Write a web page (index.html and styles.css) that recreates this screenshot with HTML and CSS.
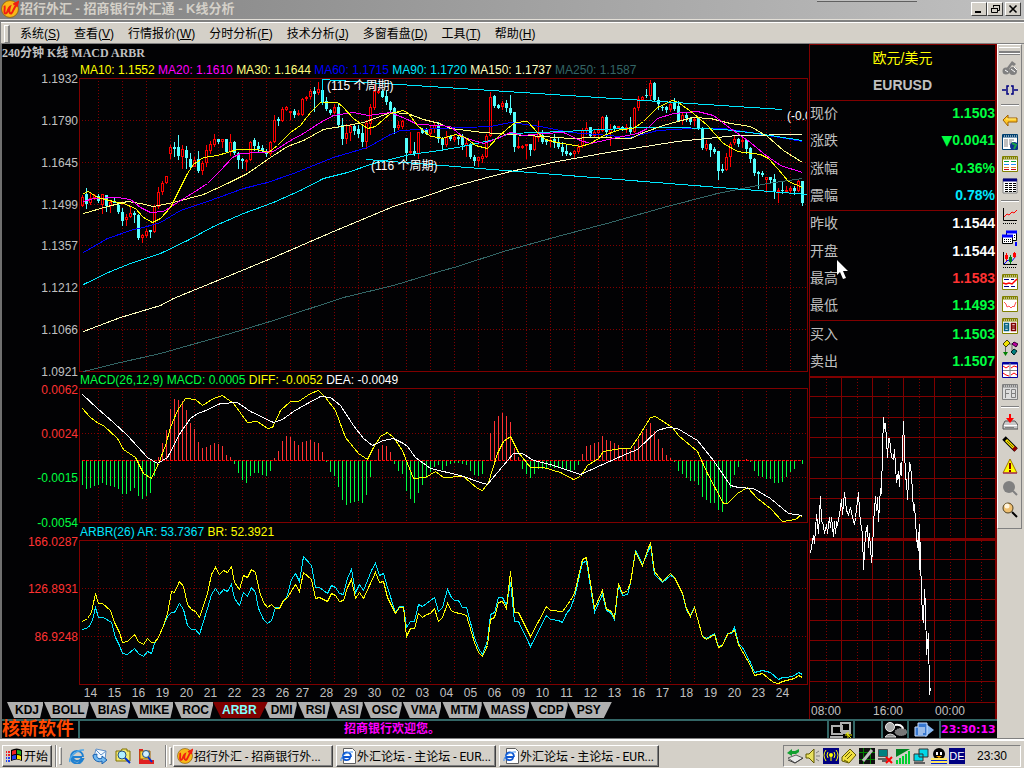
FILE: index.html
```html
<!DOCTYPE html>
<html lang="zh-CN">
<head>
  <meta charset="UTF-8">
  <meta name="viewport" content="width=device-width, initial-scale=1.0">
  <title>招行外汇 - 招商银行外汇通 - K线分析</title>
  <link rel="stylesheet" href="styles.css">
</head>
<body>
  <div class="docked-bar"></div>
  <header class="titlebar">
    <svg class="app-icon" width="18" height="18" viewBox="0 0 16 16"><circle cx="8" cy="8" r="7.5" fill="#f8b818" stroke="#805000" stroke-width=".6"/><path d="M3 5c1 2-1 7 1 7s2-5 4-6c-1 3-1 6 1 6 2-1 2-5 5-8M11 4l4-2-1 4" fill="none" stroke="#f02010" stroke-width="1.8"/></svg>
    <h1>招行外汇 - 招商银行外汇通 - K线分析</h1>
    <div class="window-buttons">
      <button aria-label="最小化"><svg width="12" height="10"><path d="M2 8h6" stroke="#000" stroke-width="2"/></svg></button>
      <button aria-label="还原"><svg width="12" height="10"><path d="M4.500 3.500v-2h6v5h-2M4 1.500h7M2.500 4.500h6v4h-6zM2 4.500h7" fill="none" stroke="#000"/></svg></button>
      <button class="close" aria-label="关闭"><svg width="12" height="10"><path d="M2.500 1.500l7 7M9.500 1.500l-7 7" stroke="#000" stroke-width="1.600"/></svg></button>
    </div>
  </header>

  <nav class="menubar">
    <span class="grip"></span>
    <button>系统(<u>S</u>)</button>
    <button>查看(<u>V</u>)</button>
    <button>行情报价(<u>W</u>)</button>
    <button>分时分析(<u>F</u>)</button>
    <button>技术分析(<u>J</u>)</button>
    <button>多窗看盘(<u>D</u>)</button>
    <button>工具(<u>T</u>)</button>
    <button>帮助(<u>H</u>)</button>
  </nav>

  <div class="workspace">
    <div class="screen">
      <main class="panels">
        <section class="charts">
          <h2>240分钟 K线 MACD ARBR</h2>
          <p class="legend">
            <span class="yellow">MA10: 1.1552</span>
            <span class="magenta">MA20: 1.1610</span>
            <span class="pale">MA30: 1.1644</span>
            <span class="blue">MA60: 1.1715</span>
            <span class="cyan">MA90: 1.1720</span>
            <span class="cream">MA150: 1.1737</span>
            <span class="slate">MA250: 1.1587</span>
          </p>
          <svg class="plot" id="price" viewBox="2 18 807 295"></svg>
          <p class="legend macd-legend">
            <span class="green">MACD(26,12,9) MACD: 0.0005</span>
            <span class="yellow">DIFF: -0.0052</span>
            <span class="white">DEA: -0.0049</span>
          </p>
          <svg class="plot" id="macd" viewBox="2 18 807 136"></svg>
          <p class="legend">
            <span class="cyan">ARBR(26) AR: 53.7367</span>
            <span class="yellow">BR: 52.3921</span>
          </p>
          <svg class="plot" id="arbr" viewBox="2 170 807 162"></svg>
          <div class="tabs">
            <button>KDJ</button>
            <button>BOLL</button>
            <button>BIAS</button>
            <button>MIKE</button>
            <button>ROC</button>
            <button class="active">ARBR</button>
            <button>DMI</button>
            <button>RSI</button>
            <button>ASI</button>
            <button>OSC</button>
            <button>VMA</button>
            <button>MTM</button>
            <button>MASS</button>
            <button>CDP</button>
            <button>PSY</button>
          </div>
        </section>

        <section class="quote">
          <div class="quote-head">
            <h2>欧元/美元</h2>
            <h3>EURUSD</h3>
          </div>
          <table>
            <tbody>
              <tr><th scope="row">现价</th><td class="green">1.1503</td></tr>
              <tr><th scope="row">涨跌</th><td class="green"><span class="arrow">▼</span>0.0041</td></tr>
              <tr><th scope="row">涨幅</th><td class="green">-0.36%</td></tr>
              <tr><th scope="row">震幅</th><td class="cyan">0.78%</td></tr>
            </tbody>
            <tbody>
              <tr><th scope="row">昨收</th><td class="white">1.1544</td></tr>
              <tr><th scope="row">开盘</th><td class="white">1.1544</td></tr>
              <tr><th scope="row">最高</th><td class="red">1.1583</td></tr>
              <tr><th scope="row">最低</th><td class="green">1.1493</td></tr>
            </tbody>
            <tbody>
              <tr><th scope="row">买入</th><td class="green">1.1503</td></tr>
              <tr><th scope="row">卖出</th><td class="green">1.1507</td></tr>
            </tbody>
          </table>
          <svg class="plot" id="intraday" viewBox="810 6 185 343"></svg>
          <svg class="pointer" width="14" height="20" viewBox="0 0 14 20"><path d="M1 0v15l3-3 3 7 3-1-3-7h5z" fill="#fff"/></svg>
        </section>
      </main>

      <footer class="statusbar">
        <strong class="brand">核新软件</strong>
        <span class="message">招商银行欢迎您。</span>
        <span class="cell wide"><svg width="24" height="16"><path d="M12 1h9v8h-9zM3 4h10v8H3z" fill="#000" stroke="#b0b0b0" stroke-width="2"/><path d="M1 15h13M13 11h9" stroke="#b0b0b0" stroke-width="2"/><path d="M16 13h7M19 10v6M17 11l5 5" stroke="#e8e800"/></svg></span>
        <span class="cell gap"></span>
        <span class="cell wide"><svg width="24" height="16"><circle cx="7" cy="5" r="4.500" fill="#aaa" stroke="#eee"/><path d="M2 15q5-6 11 0z" fill="#888" stroke="#ddd"/><path d="M12 3c8-1 9 4 7 6" fill="none" stroke="#fff" stroke-width="2"/><ellipse cx="18" cy="10" rx="6" ry="3.500" fill="#777" stroke="#aaa" stroke-dasharray="1 1"/></svg></span>
        <span class="cell page"><svg width="22" height="16"><path d="M12 1l9 7-9 7z" fill="#88b8f0"/><path d="M2 5h3V1h9v13H2z" fill="#3878d0" stroke="#cce0ff"/><path d="M5 6h7M5 8h7M5 10h7M5 12h5" stroke="#fff"/></svg></span>
        <time class="clock">23:30:13</time>
      </footer>
    </div>

    <aside class="side">
      <div class="toolbar">
        <span class="toolbar-grip"></span>
        <button aria-label="电话"><svg viewBox="0 0 16 16"><path d="M4 9l6-8 4 3-2 2-2-1-3 4z" fill="#808080"/><circle cx="4" cy="11" r="3.500" fill="#808080"/><circle cx="11" cy="11" r="4" fill="#808080"/><path d="M3 10l3 2M9 9l4 3M12 7l3 3" stroke="#fff"/></svg></button>
        <button aria-label="连接"><svg viewBox="0 0 16 16"><path d="M0 8h4M12 8h4M7 4H5v8h2M9 4h2v8H9" fill="none" stroke="#000080" stroke-width="1.500"/></svg></button>
        <hr>
        <button aria-label="后退"><svg viewBox="0 0 16 16"><path d="M1 8l5-5v3h9v4H6v4z" fill="#ffc828" stroke="#a06000"/><path d="M4 7h10" stroke="#fff080"/></svg></button>
        <button aria-label="行情首页"><svg viewBox="0 0 16 16"><path d="M.5.5h15v15H.5z" fill="#fff" stroke="#004070"/><path d="M1 2h14" stroke="#004070" stroke-width="3"/><path d="M2 2h13" stroke="#fff" stroke-dasharray="1 1"/><path d="M2 6h4M7 6h5M2 8h4M7 8h3M2 10h4M7 10h2M2 12h4" stroke="#808080"/><circle cx="12" cy="12" r="4" fill="#103090"/><path d="M10 9l4 2-2 4" stroke="#18a048" stroke-width="2" fill="none"/></svg></button>
        <button aria-label="报价列表"><svg viewBox="0 0 16 16"><path d="M.5.5h15v15H.5z" fill="#fff" stroke="#808000"/><path d="M1 2h14" stroke="#808000" stroke-width="3"/><path d="M2 2h13" stroke="#fff" stroke-dasharray="1 1"/><path d="M2 5.500h5M9 5.500h5" stroke="#00a040"/><path d="M2 8.500h5M9 8.500h5" stroke="#2090ff"/><path d="M2 11.500h5M9 11.500h5" stroke="#e08030"/><path d="M2 13.500h5M9 13.500h5" stroke="#c00020"/></svg></button>
        <button aria-label="表格"><svg viewBox="0 0 16 16"><path d="M1 1h14v14H1z" fill="#fff" stroke="#808080"/><path d="M1 2h14" stroke="#000080" stroke-width="3"/><path d="M3 5.500h11M3 7.500h11M3 9.500h11M3 11.500h11M3 13.500h11" stroke="#000" stroke-dasharray="3 1"/></svg></button>
        <hr>
        <button aria-label="分时走势"><svg viewBox="0 0 16 16"><path d="M1.500 0v12.500H15" fill="none" stroke="#000"/><path d="M1 15.500h14" stroke="#000" stroke-dasharray="1 1"/><path d="M2 9l3-3 2 1 3-3 2 1 3-3" fill="none" stroke="#f00"/></svg></button>
        <button aria-label="多窗口"><svg viewBox="0 0 16 16"><path d="M4.500 1.500h10v9h-10z" fill="#fff" stroke="#000"/><path d="M4 2h11" stroke="#00f" stroke-width="3"/><path d="M.5 5.500h10v8H.5z" fill="#fff" stroke="#000"/><path d="M0 6h11" stroke="#00f" stroke-width="3"/><path d="M2 9.500h8M2 11.500h8M12 5.500h2M12 7.500h2" stroke="#000" stroke-dasharray="1 1"/><path d="M14 12v4" stroke="#00f" stroke-width="2"/></svg></button>
        <button aria-label="K线"><svg viewBox="0 0 16 16"><path d="M1.500 0v12.500H15" fill="none" stroke="#000"/><path d="M1 15.500h14" stroke="#000" stroke-dasharray="1 1"/><path d="M2 12l4-4 3 2 5-6" fill="none" stroke="#00f"/><path d="M4.500 1v8M12.500 0v6" stroke="#f00"/><path d="M3 3h3v4H3zM11 1h3v4h-3z" fill="#f00"/><path d="M8.500 3v9" stroke="#008020"/><path d="M7 5h3v5H7z" fill="#008020"/></svg></button>
        <button aria-label="指标一"><svg viewBox="0 0 16 16"><path d="M.5.5h15v15H.5z" fill="#fff" stroke="#808000"/><path d="M1 2h14" stroke="#808000" stroke-width="3"/><path d="M2 2h13" stroke="#fff" stroke-dasharray="1 1"/><path d="M2 5.500h5M9 5.500h3M2 12.500h5M9 12.500h4" stroke="#000080"/><path d="M1 9l3 1 3-1 3 1 5-5" fill="none" stroke="#f00" stroke-width="1.500"/></svg></button>
        <button aria-label="指标二"><svg viewBox="0 0 16 16"><path d="M.5.5h15v15H.5z" fill="#fff" stroke="#808000"/><path d="M1 2h14" stroke="#808000" stroke-width="3"/><path d="M2 2h13" stroke="#fff" stroke-dasharray="1 1"/><path d="M2 6l2 2 1 3 2-1 2 2 2-2 1 1 2-5" fill="none" stroke="#ff5050"/></svg></button>
        <button aria-label="盘口"><svg viewBox="0 0 16 16"><path d="M.5.5h15v15H.5z" fill="#fff" stroke="#808000"/><path d="M1 2h14" stroke="#808000" stroke-width="3"/><path d="M2 2h13" stroke="#fff" stroke-dasharray="1 1"/><path d="M2.500 5.500h4v7h-4zM2.500 8h4M2.500 10h4" fill="none" stroke="#006080" stroke-width="1.500"/><path d="M9.500 5.500h4v7h-4zM9.500 8h4M9.500 10h4" fill="none" stroke="#800000" stroke-width="1.500"/></svg></button>
        <button aria-label="画线"><svg viewBox="0 0 16 16"><path d="M6 4h4v7h3M3.500 7v7" fill="none" stroke="#606060"/><path d="M1 4l4-4 3 3-4 4z" fill="#f0e000" stroke="#404000"/><path d="M10 4l2-2 4 2-2 3z" fill="#c000a0" stroke="#300030"/><path d="M9 12l3-3 3 2-3 4z" fill="#008080" stroke="#002020"/><path d="M1 12h5l-2.500 4z" fill="#008000"/></svg></button>
        <button aria-label="四图组合"><svg viewBox="0 0 16 16"><path d="M.5.5h15v15H.5z" fill="#fff" stroke="#0000a0"/><path d="M1 1.500h14" stroke="#0000a0" stroke-width="2"/><path d="M8 1v14M1 8.500h14" stroke="#808080"/><path d="M1 4l3 2 3-2M9 6l3-2 3 1M1 11l3 2 3 1M9 13l3-2 3 2" fill="none" stroke="#f00"/></svg></button>
        <button aria-label="F8"><svg viewBox="0 0 16 16"><path d="M.5.500h15v15H.5z" fill="#ddd" stroke="#808080"/><path d="M1 2h14" stroke="#808080" stroke-width="3"/><path d="M2 2h13" stroke="#fff" stroke-dasharray="1 1"/><path d="M3.500 14V5.500H8M3 9.500h4M9.500 5.500h4v4h-4zM9.500 9.500h4v4h-4z" fill="none" stroke="#808080"/></svg></button>
        <hr>
        <button aria-label="下载"><svg viewBox="0 0 16 16"><path d="M3 7h10l3 4v4H1v-4z" fill="#c8c8c8" stroke="#505050"/><path d="M2 11.500h13" stroke="#fff"/><path d="M3 13.500h9" stroke="#808080"/><path d="M7 0h2v4h3l-4 5-4-5h3z" fill="#f00"/></svg></button>
        <button aria-label="画笔"><svg viewBox="0 0 16 16"><path d="M2 2l12 12" stroke="#000" stroke-width="5"/><path d="M4 4l8 8" stroke="#f8e800" stroke-width="3"/><path d="M11.500 11.500l2.500 2.500" stroke="#900000" stroke-width="4"/><path d="M5 5l6 6" stroke="#806000"/></svg></button>
        <button aria-label="预警"><svg viewBox="0 0 16 16"><path d="M8 1l7 14H1z" fill="#ff0" stroke="#a07000"/><path d="M15 15H1" stroke="#a0006a"/><path d="M8 5v6M8 12v2" stroke="#800000" stroke-width="2"/></svg></button>
        <button aria-label="缩小"><svg viewBox="0 0 16 16"><circle cx="7" cy="7" r="6" fill="#808080"/><path d="M11 11l4 4" stroke="#808080" stroke-width="2"/></svg></button>
        <button aria-label="放大"><svg viewBox="0 0 16 16"><circle cx="6" cy="6" r="5" fill="#f0c070" stroke="#504020"/><circle cx="5" cy="4" r="2.500" fill="#fff4dc"/><path d="M10 10l5 5" stroke="#000" stroke-width="2"/></svg></button>
      </div>
    </aside>
  </div>

  <footer class="taskbar">
    <button class="start"><svg width="17" height="15" viewBox="0 0 17 15"><path d="M5 2q6-3 11 0v11q-5-3-11 0z" fill="#000"/><path d="M6 3q2-1 4-1v4q-2 0-4 1z" fill="#f02020"/><path d="M11 2q2 0 4 1v4q-2-1-4-1z" fill="#20b020"/><path d="M6 8q2-1 4-1v4q-2 0-4 1z" fill="#2040f0"/><path d="M11 7q2 0 4 1v4q-2-1-4-1z" fill="#f8e000"/><path d="M0 4h1M2 4h2M0 7h1M2 7h2" stroke="#f02020" stroke-width="2"/><path d="M0 10h1M2 10h2M0 13h1M2 13h2" stroke="#2040f0" stroke-width="2"/></svg>开始</button>
    <span class="divider"></span>
    <span class="grip"></span>
    <div class="quick">
      <button aria-label="Internet Explorer"><svg viewBox="0 0 16 16"><path d="M13 9H4c0 5 6 5 8 2h2c-3 7-12 5-12-2 0-8 12-8 12 0" fill="none" stroke="#2080d0" stroke-width="2"/><path d="M1 14C-1 10 8 1 15 2" fill="none" stroke="#50a8e8" stroke-width="1.500"/></svg></button>
      <button aria-label="Outlook"><svg viewBox="0 0 16 16"><path d="M4 1l10 2-1 9-11-3z" fill="#f0f8ff" stroke="#6090c8"/><path d="M4 2l5 5 5-4" fill="none" stroke="#6090c8"/><path d="M1 7c0 6 6 8 9 6v3l5-4-5-4v2c-3 2-6 0-5-4z" fill="#70b8f0" stroke="#1860b0"/></svg></button>
      <button aria-label="查找文件"><svg viewBox="0 0 16 16"><path d="M1 3h5l1-2h5v2h3v10H1z" fill="#f0e870" stroke="#807000"/><circle cx="7" cy="7" r="4" fill="#b0f0ff" stroke="#205080"/><path d="M10 10l5 5" stroke="#0030d0" stroke-width="2"/></svg></button>
      <button aria-label="搜索"><svg viewBox="0 0 16 16"><path d="M1 1h4v11h11v4H1z" fill="#e02020"/><path d="M2 3h10v8H2z" fill="#f8d040" stroke="#a06000"/><circle cx="8" cy="6" r="3.500" fill="#d0f0ff" stroke="#205080"/><path d="M10 9l4 5" stroke="#0030d0" stroke-width="2"/></svg></button>
    </div>
    <span class="divider"></span>
    <span class="grip"></span>
    <div class="tasks">
      <button><svg viewBox="0 0 16 16"><circle cx="8" cy="8" r="7.500" fill="#f8b818" stroke="#805000" stroke-width=".6"/><path d="M3 5c1 2-1 7 1 7s2-5 4-6c-1 3-1 6 1 6 2-1 2-5 5-8M11 4l4-2-1 4" fill="none" stroke="#f02010" stroke-width="1.800"/></svg>招行外汇 - 招商银行外...</button>
      <button><svg viewBox="0 0 16 16"><path d="M3.500.500h9l3 3v12h-12z" fill="#fff" stroke="#606060"/><path d="M11 9H3c0 4 6 4 7 1M3 8c0-5 8-5 8 1" fill="none" stroke="#1058d0" stroke-width="1.800"/><path d="M1 13C0 9 7 3 13 4" fill="none" stroke="#4090f0"/></svg>外汇论坛 - 主论坛 - EUR...</button>
      <button><svg viewBox="0 0 16 16"><path d="M3.500.500h9l3 3v12h-12z" fill="#fff" stroke="#606060"/><path d="M11 9H3c0 4 6 4 7 1M3 8c0-5 8-5 8 1" fill="none" stroke="#1058d0" stroke-width="1.800"/><path d="M1 13C0 9 7 3 13 4" fill="none" stroke="#4090f0"/></svg>外汇论坛 - 主论坛 - EUR...</button>
    </div>
    <div class="tray">
      <svg viewBox="0 0 16 16"><path d="M1 10l8-3 7 3-8 5z" fill="#e8e8e8" stroke="#606060"/><path d="M1 12l7 3 8-5" fill="none" stroke="#404040"/><path d="M0 5l5-4v2h3l4-2v3L9 6H5v2z" fill="#10a030"/></svg>
      <svg viewBox="0 0 16 16"><path d="M1 6h3l5-5v14l-5-5H1z" fill="#e8e060" stroke="#605800"/><path d="M11 5l3-2M11 8h4M11 11l3 2" stroke="#808080"/></svg>
      <svg viewBox="0 0 16 16"><path d="M0 0h16v16H0z" fill="#000080"/><circle cx="8" cy="7" r="2" fill="#ff0"/><path d="M8 8v5M5 4q-2 3 0 6M11 4q2 3 0 6M3 2q-4 5 0 11M13 2q4 5 0 11" fill="none" stroke="#ff0"/></svg>
      <svg viewBox="0 0 16 16"><path d="M1 9l8-8 6 6-7 8-7-2z" fill="#f0e040" stroke="#605800"/><path d="M4 9l5-5M6 11l5-5M3 12l4 2" stroke="#605800"/></svg>
      <svg viewBox="0 0 16 16"><path d="M0 0h16v16H0z" fill="#101010"/><path d="M4.500 0v16M11.500 0v16M0 4.500h16M0 11.500h16" stroke="#008000"/><path d="M4 13l9-11" stroke="#c0c0c0" stroke-width="3"/></svg>
      <svg viewBox="0 0 16 16"><path d="M1.500 1.500h9v7h-9z" fill="#008080" stroke="#505050"/><path d="M1 11h10M5 13h5" stroke="#606060" stroke-width="2"/><path d="M9 9l6 6M15 9l-6 6" stroke="#f00" stroke-width="2"/></svg>
      <svg viewBox="0 0 16 16"><path d="M1 1h14L1 9z" fill="#008020"/><path d="M2 12v4M5 10v6M8 8v8M11 6v10M14 3v13" stroke="#00d030" stroke-width="2"/></svg>
      <svg viewBox="0 0 16 16"><path d="M6 1h9v8H6zM1 6h9v7H1z" fill="#00d8e8" stroke="#303030"/><path d="M1 15h11" stroke="#606060" stroke-width="2"/></svg>
      <svg viewBox="0 0 16 16"><ellipse cx="8" cy="6" rx="6" ry="6" fill="#000"/><path d="M5 4h2v3H5zM9 4h2v3H9z" fill="#fff"/><path d="M5 8h6l-3 2z" fill="#f8a000"/><path d="M0 10h16v6H0z" fill="#ffe860"/><path d="M0 12.500h16M0 15.500h16" stroke="#0020d0"/></svg>
      <span class="lang">DE</span>
      <time>23:30</time>
    </div>
  </footer>

  <script src="charts.js"></script>
</body>
</html>
```
FILE: styles.css
```css
* {
  box-sizing: border-box;
}

body {
  margin: 0;
  min-height: 100vh;
  display: flex;
  flex-direction: column;
  background-color: #d4d0c8;
  font-family: "Liberation Sans", "Noto Sans CJK SC", sans-serif;
  font-size: 12px;
  color: #000;
}

h1, h2, h3, p {
  margin: 0;
  font-size: 12px;
}

button {
  font: inherit;
  color: inherit;
  padding: 0;
  border: none;
  background: none;
  white-space: nowrap;
}

svg {
  display: block;
  flex-shrink: 0;
}

.yellow { color: #ffff00; }
.magenta { color: #ff00ff; }
.pale { color: #ffff80; }
.blue { color: #0000ff; }
.cyan { color: #00e8ff; }
.cream { color: #ffffc0; }
.slate { color: #336666; }
.green { color: #00ff40; }
.white { color: #ffffff; }
.red { color: #ff3232; }

/* title bar */
.docked-bar {
  position: absolute;
  top: 0;
  right: 107px;
  width: 100px;
  height: 2px;
  background-color: #c0c0c0;
  border-bottom: 1px solid #606060;
}

.titlebar {
  height: 20px;
  display: flex;
  align-items: center;
  padding: 0 3px 2px 1px;
  gap: 1px;
  background: linear-gradient(to right, #808080, #c0c0c0);
  border-bottom: 1px solid #e4e0d8;
}

.titlebar h1 {
  flex: 1;
  font-size: 13px;
  line-height: 18px;
  color: #d4d0c8;
}

.window-buttons {
  display: flex;
}

.window-buttons button {
  width: 16px;
  height: 14px;
  display: flex;
  align-items: center;
  justify-content: center;
  background-color: #d4d0c8;
  border: 1px solid;
  border-color: #fff #404040 #404040 #fff;
}

.window-buttons .close {
  margin-left: 2px;
}

/* menu bar */
.menubar {
  height: 24px;
  display: flex;
  align-items: center;
  padding: 2px 0 0 3px;
  border-top: 2px solid #808080;
  border-bottom: 1px solid #808080;
  border-left: 1px solid #808080;
  box-shadow: inset 0 1px #fff;
}

.menubar button {
  padding: 0 7px;
  line-height: 18px;
}

.grip {
  width: 3px;
  height: 18px;
  border: 1px solid;
  border-color: #fff #808080 #808080 #fff;
}

.menubar .grip {
  width: 6px;
  margin-right: 3px;
  border-right-width: 2px;
}

/* workspace */
.workspace {
  flex: 1;
  display: flex;
}

.screen {
  flex: 1;
  min-width: 0;
  display: flex;
  flex-direction: column;
  background-color: #020204;
  border-left: 2px solid #707070;
}

.panels {
  flex: 1;
  display: flex;
}

.charts {
  flex: 1;
  min-width: 0;
}

.charts h2 {
  font-family: "Liberation Serif", "Noto Sans CJK SC", serif;
  line-height: 18px;
  color: #c0c0c0;
}

.legend {
  padding-left: 78px;
  line-height: 16px;
  white-space: nowrap;
}

.macd-legend {
  line-height: 15px;
}

.plot {
  width: 100%;
  height: auto;
  overflow: visible;
  shape-rendering: crispEdges;
  fill: none;
}

.plot text {
  stroke: none;
  font-size: 12px;
}

/* indicator tabs */
.tabs {
  display: flex;
  height: 17px;
  padding: 0 4px 1px;
}

.tabs button {
  padding: 0 4px 0 9px;
  font-weight: bold;
  line-height: 16px;
  color: #000;
  background-color: #b0b0b0;
  clip-path: polygon(1px 0, 100% 0, 100% 20%, calc(100% - 3px) 100%, 8px 100%);
}

.tabs .active {
  position: relative;
  z-index: 1;
  margin-right: -6px;
  padding-right: 11px;
  color: #80ffff;
  background-color: #800000;
}

.tabs .active,
.tabs button:last-child {
  clip-path: polygon(0 0, 100% 0, calc(100% - 8px) 100%, 8px 100%);
}

.tabs button:last-child {
  padding-right: 11px;
}

/* quote panel */
.quote {
  position: relative;
  width: 188px;
  border: solid #800000;
  border-width: 1px 2px 0 1px;
}

.quote-head {
  height: 55px;
  text-align: center;
}

.quote-head h2,
.quote-head h3 {
  font-size: 14px;
  line-height: 27px;
}

.quote-head h2 {
  font-weight: normal;
  color: #ffff00;
}

.quote-head h3 {
  color: #c0c0c0;
}

.quote table {
  width: 100%;
  height: 276px;
  border-collapse: collapse;
  font-size: 14px;
  line-height: 20px;
}

.quote tbody {
  border-top: 1px solid #800000;
}

.quote th {
  padding: 0 0 3px;
  font-weight: normal;
  text-align: left;
  color: #c0c0c0;
}

.quote td {
  padding: 0 0 3px;
  font-weight: bold;
  text-align: right;
}

.arrow {
  font-family: "DejaVu Sans", sans-serif;
  line-height: 1;
}

.pointer {
  position: absolute;
  left: 26px;
  top: 215px;
}

/* status bar */
.statusbar {
  display: flex;
  height: 19px;
  line-height: 17px;
  border-top: 2px solid #336666;
}

.brand {
  width: 78px;
  font-size: 18px;
  color: #ff4800;
  border-right: 2px solid #336666;
}

.message {
  flex: 1;
  padding-left: 264px;
  font-weight: bold;
  color: #ff00ff;
}

.cell {
  display: flex;
  align-items: center;
  justify-content: center;
  border-left: 2px solid #336666;
}

.wide { width: 26px; }
.gap { width: 28px; }
.page { width: 32px; }

.clock {
  width: 58px;
  border-left: 2px solid #336666;
  font-family: "DejaVu Sans", sans-serif;
  font-size: 11px;
  font-weight: bold;
  color: #ff00ff;
}

/* side toolbar */
.side {
  width: 27px;
}

.toolbar {
  height: 485px;
  margin-right: 2px;
  display: flex;
  flex-direction: column;
  align-items: center;
  border: 1px solid;
  border-color: #fff #808080 #808080 #fff;
}

.toolbar-grip {
  width: 21px;
  height: 7px;
  margin: 2px 0 3px;
  border: solid #fff;
  border-width: 1px 0;
  box-shadow: 0 1px #808080, inset 0 -2px #808080;
}

.toolbar button {
  width: 22px;
  height: 22px;
  padding: 3px;
}

.toolbar svg,
.quick svg,
.tasks svg,
.tray svg {
  width: 16px;
  height: 16px;
}

.toolbar hr {
  width: 18px;
  height: 2px;
  margin: 3px 0;
  border: none;
  border-top: 1px solid #808080;
  border-bottom: 1px solid #fff;
}

/* task bar */
.taskbar {
  display: flex;
  align-items: center;
  height: 30px;
  padding: 4px 3px 0 2px;
  border-top: 1px solid #808080;
  box-shadow: inset 0 2px #fff;
}

.start,
.tasks button {
  display: flex;
  align-items: center;
  height: 22px;
  border: 1px solid;
  border-color: #fff #404040 #404040 #fff;
  box-shadow: inset -1px -1px #808080;
}

.start {
  width: 50px;
  padding-left: 3px;
  gap: 1px;
}

.divider {
  width: 2px;
  height: 22px;
  margin: 0 2px 0 3px;
  border-left: 1px solid #808080;
  border-right: 1px solid #fff;
}

.quick {
  display: flex;
  gap: 7px;
  padding: 0 8px 0 7px;
}

.tasks {
  flex: 1;
  display: flex;
  gap: 3px;
  padding-left: 1px;
}

.tasks button {
  width: 160px;
  padding-left: 3px;
  gap: 1px;
  overflow: hidden;
  font-family: Roboto, "Noto Sans CJK SC", sans-serif;
}

.tray {
  display: flex;
  align-items: center;
  gap: 2px;
  width: 238px;
  height: 22px;
  padding: 0 13px 0 3px;
  border: 1px solid;
  border-color: #808080 #fff #fff #808080;
}

.lang {
  width: 16px;
  line-height: 16px;
  font-size: 11px;
  text-align: center;
  color: #fff;
  background-color: #000080;
}

.tray time {
  margin-left: auto;
}
```
FILE: charts.js
```js
const LEFT = 79.5;
const RIGHT = 807.5;
const GRID = '#800000';
const DOTS = 'stroke-dasharray="1 2"';

// day boundaries, one label in front of each
const days = ['14', '15', '16', '19', '20', '21', '22', '23', '26', '27', '28', '29', '30', '02', '03',
  '04', '05', '06', '09', '10', '11', '12', '13', '16', '17', '18', '19', '20', '23', '24'];
const dayX = days.map((d, i) => (i < 9 ? 98.5 + 24 * i : 310.5 + 24 * (i - 9)));

// each candle: direction, high, body top, body bottom, low
const candles = `
u135,137,146,147 d128,134,144,149 u133,138,143,145 u134,135,138,140 d134,136,141,143 u134,134,145,154
d135,135,146,152 u140,142,146,153 d138,141,143,143 d143,145,152,154 d148,152,161,166 u154,157,160,166
u147,153,157,158 d151,153,155,163 d154,155,178,180 u174,175,178,183 u169,171,176,178 d170,170,172,178
u145,146,172,173 u127,132,147,149 u121,123,132,135 u116,116,123,124 u85,87,94,99 d82,87,89,97
d75,87,96,100 u85,89,97,109 d86,90,98,109 d93,99,107,108 u97,100,107,107 d91,99,111,113
u101,103,111,115 u85,90,103,107 u81,84,91,94 u74,79,85,87 d79,79,82,84 u79,79,82,88
d79,79,92,93 u74,82,92,96 d81,82,93,95 d92,93,100,109 d98,99,101,109 u99,100,102,111
u81,82,100,101 d78,80,86,91 d82,86,89,92 d85,88,91,92 d89,92,94,97 u81,82,94,96
u55,60,82,83 d57,59,61,66 u47,49,61,62 u46,47,50,51 u51,51,53,60 d49,51,55,58
u50,53,55,56 u38,39,55,56 u36,37,39,41 u29,31,37,39 d27,31,34,52 u22,29,33,35
d19,30,42,44 d37,41,49,51 d49,50,53,55 u44,47,53,54 d44,47,65,68 d58,65,79,85
u64,73,79,84 u64,66,73,81 d65,66,71,75 d65,69,74,78 d66,73,82,87 u60,63,82,89
u44,47,64,75 u24,31,48,50 u27,31,33,34 d30,31,37,38 d31,36,42,45 d41,42,50,54
d47,48,68,74 u61,65,68,70 u60,61,67,69 d78,78,93,101 u72,91,93,95 d82,91,94,96
u72,72,94,99 d68,70,73,74 d68,69,74,75 u66,69,74,77 u62,65,69,73 d62,65,79,83
d77,78,85,91 u71,77,85,87 d75,76,79,81 u75,77,80,82 d75,77,79,85 d74,77,85,90
u79,83,86,97 d83,84,97,99 d95,97,101,106 u97,97,101,107 u94,96,99,103 u74,76,97,98
u32,37,76,77 d35,36,46,48 d44,45,48,49 u41,43,47,50 d40,43,48,52 d35,48,53,55
d52,52,87,92 u77,86,88,89 u85,86,88,89 u84,84,85,99 d84,84,90,96 u75,76,90,91
u61,73,78,82 d70,75,82,84 d79,80,82,85 u78,80,82,87 d74,79,83,88 d78,83,87,89
d82,87,92,96 d85,91,94,96 d92,93,95,96 u90,91,94,98 u84,87,92,94 u68,70,86,88
u62,68,71,75 d67,67,76,77 u69,72,76,77 u68,70,73,78 u56,57,71,72 d55,57,72,78
u64,69,73,86 d65,66,69,72 u66,66,68,69 d66,67,69,71 u64,67,70,73 d57,67,72,75
u47,48,72,73 u36,39,48,51 u36,37,40,41 d29,35,36,38 u20,23,36,40 d22,23,40,42
d37,40,44,50 d45,47,48,51 d46,47,50,53 u43,44,50,52 d38,43,49,51 d41,46,61,62
u53,55,61,65 d53,55,58,62 d57,59,62,65 u57,59,61,66 d57,57,68,70 d67,68,88,90
u80,84,89,91 d83,84,90,97 d87,89,92,94 d91,91,111,120 d104,109,111,113 u93,97,110,111
u82,84,97,107 u75,79,83,85 d78,79,84,87 u77,80,82,88 d80,80,89,94 d87,88,99,103
d98,99,113,116 d111,112,114,129 d111,113,115,117 u117,117,120,133 d117,117,120,124 d114,119,132,139
u128,130,131,143 d121,130,131,134 u126,130,131,133 u126,128,131,133 d126,128,131,135 u119,121,131,132
d121,121,143,146`;

const averages = [
  ['#336666', '83,311 120,302 160,293 220,276 273,260 343,237 393,225 439,211 457,206 503,191 557,176 610,162 663,147 717,133 767,123 802,118'],
  ['#ffffc0', '83,271 120,257 160,245 173,238 227,216 273,197 333,171 393,146 430,134 450,127 483,118 510,111 557,101 613,91 677,81 717,77 737,75 802,74'],
  ['#0000ff', '83,192 107,178 133,169 143,167 160,162 180,150 207,141 243,128 267,122 293,113 333,97 367,87 390,74 400,70 439,68 490,66 510,62 540,66 570,72 597,74 630,77 657,70 690,68 723,68 750,72 780,77 802,81'],
  ['#00e8ff', '83,224 110,211 130,203 160,193 187,180 213,166 243,153 273,142 300,130 323,118 347,112 373,103 410,94 439,90 457,87 490,80 510,73 563,71 603,69 643,67 680,67 723,69 757,73 802,80'],
  ['#ffff80', '83,153 107,146 127,141 140,143 153,146 173,142 203,134 227,123 247,113 270,97 287,86 303,80 323,69 347,65 363,62 377,57 390,52 407,53 423,59 439,63 450,68 483,72 510,74 543,76 570,78 593,77 630,78 643,72 663,65 677,61 693,57 710,58 730,63 750,66 767,76 783,90 802,102'],
  ['#ff00ff', '83,141 93,138 117,137 130,139 140,147 150,152 163,151 177,142 193,132 207,123 220,110 232,97 240,93 260,92 273,91 290,80 303,73 320,62 333,55 353,52 368,55 390,52 407,59 417,64 439,65 450,66 463,77 483,83 497,78 510,72 523,75 543,73 563,72 580,80 590,83 617,77 637,73 647,68 657,58 673,53 697,51 713,55 730,68 750,82 763,93 780,105 802,112'],
  ['#ffff00', '83,133 88,131 97,137 113,141 123,143 135,148 143,157 152,162 160,158 170,147 177,133 187,113 193,104 203,97 217,95 237,89 257,89 268,92 277,85 290,72 300,65 310,52 320,42 337,42 342,46 353,58 367,68 375,66 390,53 403,50 408,53 417,65 430,76 439,77 442,78 455,74 465,77 475,85 487,88 497,77 507,68 515,62 527,61 537,72 545,79 557,82 580,86 590,83 603,75 620,69 633,68 643,61 657,47 672,40 678,42 693,53 707,65 723,83 737,91 760,94 768,98 777,108 788,121 802,127']
];

const macdBars = [115, 119, 118, 116, 115, 113, 115, 116, 117, 119, 124, 124, 121, 118, 126, 129, 126, 123, 106,
  87, 73, 60, 39, 29, 30, 31, 40, 53, 59, 72, 78, 77, 75, 73, 74, 76, 85, 87, 94, 103, 110, 113, 106, 103, 103,
  105, 106, 101, 88, 81, 71, 66, 67, 71, 75, 72, 71, 70, 72, 73, 82, 92, 102, 106, 117, 130, 135, 133, 132, 131,
  133, 125, 107, 90, 79, 75, 76, 82, 94, 101, 104, 121, 129, 133, 123, 115, 108, 102, 97, 95, 100, 96, 94, 93,
  93, 94, 95, 101, 105, 106, 104, 91, 63, 51, 46, 43, 46, 52, 78, 87, 99, 104, 108, 104, 99, 99, 99, 97, 98,
  98, 99, 100, 101, 100, 95, 84, 76, 75, 73, 72, 66, 70, 71, 73, 75, 78, 79, 80, 76, 69, 62, 59, 53, 61, 69,
  78, 85, 88, 92, 101, 104, 108, 111, 111, 115, 127, 130, 133, 133, 140, 142, 134, 118, 105, 97, 91, 89, 92,
  101, 106, 107, 109, 109, 113, 113, 112, 107, 102, 99, 91, 94];

const diff = '82,38 90,47 98,53 103,55 117,68 123,79 135,87 143,103 151,108 158,93 165,75 170,57 177,40 185,28 195,29 202,35 213,28 222,25 233,33 247,52 257,51 267,58 272,57 280,40 290,31 298,31 310,23 318,20 325,27 335,40 345,67 358,83 367,89 373,77 380,66 387,62 393,67 402,80 407,93 413,108 425,107 435,101 443,107 463,106 477,118 482,120 488,112 497,83 503,71 510,66 518,82 530,97 543,97 560,102 573,109 580,106 587,95 598,88 603,81 620,78 630,78 637,68 650,47 655,46 672,57 678,65 697,81 707,103 723,133 727,133 737,123 747,117 757,128 770,138 782,151 795,149 800,145 802,146';
const dea = '82,24 97,38 113,52 127,65 147,87 157,93 167,87 180,62 190,48 197,43 203,41 220,33 237,32 250,41 273,52 282,49 293,41 307,33 320,26 330,27 340,35 353,55 363,68 372,75 383,70 393,68 403,73 407,76 415,87 430,98 460,105 480,112 487,114 497,102 513,83 522,83 533,90 550,94 580,104 600,95 627,83 637,79 657,60 667,57 677,58 697,70 713,90 730,115 738,117 753,118 770,128 788,143 802,145';

const ar = '82,259 88,257 92,250 95,237 98,247 103,247 111,252 115,267 119,275 122,283 127,284 134,278 138,283 143,286 147,281 151,283 154,273 158,267 167,246 171,242 174,242 179,233 183,239 187,255 191,259 195,259 199,264 207,238 211,224 215,218 219,224 223,219 227,221 231,214 234,228 239,235 243,222 247,226 251,217 255,222 258,238 263,249 267,253 271,250 275,237 279,237 287,225 291,209 295,203 299,211 303,186 311,195 315,217 319,217 327,223 331,215 335,217 339,223 343,224 347,208 351,199 355,222 359,214 363,220 371,200 375,193 379,205 383,203 387,217 395,242 399,236 403,236 406,257 410,251 414,251 418,234 422,236 426,233 434,227 438,241 442,237 447,219 451,227 454,230 458,230 462,237 466,237 474,267 478,278 482,284 487,270 490,244 494,242 498,227 502,227 506,235 510,212 514,251 518,251 530,276 546,245 550,249 558,250 562,252 566,243 570,238 574,227 582,192 586,191 594,242 602,224 606,240 610,242 614,249 618,215 622,225 627,224 630,213 635,180 638,185 642,194 647,183 650,175 654,204 662,212 670,205 674,207 682,223 686,240 690,245 694,237 702,266 706,268 714,263 718,276 722,275 727,263 731,263 734,257 738,273 742,277 750,292 754,302 762,300 770,302 778,309 782,307 787,307 794,305 798,302 802,304';
const br = '82,251 87,248 91,242 95,223 98,233 102,233 110,240 114,252 119,262 122,272 127,271 134,264 138,271 143,274 147,268 151,272 154,272 158,267 163,255 167,243 171,221 174,222 179,211 183,216 187,234 191,239 195,241 199,247 207,223 211,204 215,197 219,204 223,200 227,202 231,196 234,212 239,219 243,205 247,207 251,199 255,202 259,221 263,232 267,237 271,234 275,238 279,238 283,230 287,227 295,214 299,221 303,202 311,209 315,228 319,227 327,231 331,223 335,225 339,231 343,230 347,217 351,209 355,228 359,222 363,228 375,202 379,212 383,211 387,227 395,243 399,237 403,237 406,266 410,258 414,258 418,243 422,247 426,244 430,243 434,238 438,251 442,247 447,233 451,240 454,242 460,243 466,245 474,272 478,282 482,286 487,275 490,249 494,247 498,232 502,231 506,238 510,201 514,242 518,242 530,266 546,236 550,240 562,241 570,230 574,223 582,189 586,187 594,238 602,220 606,239 610,240 614,247 618,213 622,223 627,220 630,212 635,182 642,195 647,180 650,172 654,201 662,211 670,203 674,207 682,223 686,238 690,246 694,237 702,266 706,269 714,264 718,277 722,275 727,264 734,260 738,274 750,295 754,305 762,303 767,307 773,312 778,313 782,311 794,308 798,305 802,307';

const today = '810,183 813,165 814,173 816,144 818,163 820,126 821,150 823,155 824,163 826,154 827,163 829,147 830,157 831,147 833,166 834,151 835,163 836,152 837,154 839,144 841,129 842,144 844,122 846,140 848,144 850,137 852,147 854,154 855,147 858,122 859,140 860,152 862,163 863,199 865,163 867,155 868,177 869,163 871,192 872,182 873,152 875,126 876,140 877,127 878,151 880,118 881,123 882,80 883,47 884,58 885,53 887,87 888,68 889,68 891,87 893,89 894,79 896,112 898,101 899,116 900,93 901,105 903,51 904,77 905,108 906,110 907,129 909,93 910,95 911,105 913,140 914,134 916,166 917,177 918,162 919,199 919,154 921,222 922,247 923,252 924,219 925,235 926,284 928,263 929,324 930,318';

function line(x1, y1, x2, y2, color, extra = '') {
  return `<line x1="${x1}" y1="${y1}" x2="${x2}" y2="${y2}" stroke="${color}" ${extra}/>`;
}

function curve(points, color) {
  return `<polyline points="${points}" transform="translate(.5 .5)" stroke="${color}"/>`;
}

function label(x, y, text, color, anchor = 'start') {
  return `<text x="${x}" y="${y}" fill="${color}" text-anchor="${anchor}">${text}</text>`;
}

// frame and dotted grid shared by the three indicator plots
function frame(top, bottom, rows) {
  let out = dayX.map(x => line(x, top + 2.5, x, bottom, GRID, DOTS)).join('');
  out += rows.map(y => line(LEFT + 2.5, y, RIGHT, y, GRID, DOTS)).join('');
  out += `<rect x="${LEFT}" y="${top}" width="${RIGHT - LEFT}" height="${bottom - top}" stroke="${GRID}"/>`;
  return out;
}

function drawPrice() {
  const rows = [60.5, 102.5, 144.5, 185.5, 227.5, 269.5];
  let out = frame(18.5, 311.5, rows);
  const prices = ['1.1932', '1.1790', '1.1645', '1.1499', '1.1357', '1.1212', '1.1066', '1.0921'];
  [18.5, ...rows, 311.5].forEach((y, i) => {
    out += label(78, y + 4.5, prices[i], '#c0c0c0', 'end');
  });

  candles.trim().split(/\s+/).forEach((c, i) => {
    const x = 82 + 4 * i;
    const [high, top, bottom, low] = c.slice(1).split(',').map(Number);
    if (c[0] === 'u') {
      out += line(x + 0.5, high, x + 0.5, top, '#ff0000') + line(x + 0.5, bottom, x + 0.5, low, '#ff0000');
      out += `<rect x="${x - 0.5}" y="${top + 0.5}" width="2" height="${Math.max(bottom - top - 1, 1)}" stroke="#ff0000"/>`;
    } else {
      out += line(x + 0.5, high, x + 0.5, low, '#54ffff');
      out += `<rect x="${x - 1}" y="${top}" width="3" height="${bottom - top}" fill="#54ffff"/>`;
    }
  });

  averages.forEach(([color, points]) => { out += curve(points, color); });
  out += curve('322,44 322,19 782,49', '#00e8ff') + curve('366,99 807,134', '#00e8ff');
  out += label(327, 30, '(115 个周期)', '#fff') + label(371, 110, '(116 个周期)', '#fff');
  out += '<clipPath id="edge"><rect x="780" y="40" width="27" height="30"/></clipPath>';
  out += `<g clip-path="url(#edge)">${label(787, 60, '(-0.0', '#fff')}</g>`;
  document.getElementById('price').innerHTML = out;
}

function drawMacd() {
  let out = frame(18.5, 152.5, [63.5, 107.5]);
  out += label(78, 24, '0.0062', '#ff3232', 'end') + label(78, 68, '0.0024', '#ff3232', 'end');
  out += label(78, 112, '-0.0015', '#00ff40', 'end') + label(78, 157, '-0.0054', '#00ff40', 'end');
  macdBars.forEach((y, i) => {
    const x = 82.5 + 4 * i;
    out += line(x, 90, x, y, y < 90 ? '#ff3232' : '#00ff40');
  });
  out += line(82, 90.5, 802, 90.5, '#ff0000', 'stroke-dasharray="3 1"');
  out += curve(diff, '#ffff00') + curve(dea, '#fff');
  document.getElementById('macd').innerHTML = out;
}

function drawArbr() {
  let out = frame(170.5, 314.5, [218.5, 266.5]);
  out += label(78, 176, '166.0287', '#ff3232', 'end');
  out += label(78, 223, '126.8931', '#ff3232', 'end');
  out += label(78, 271, '86.9248', '#ff3232', 'end');
  out += curve(ar, '#00e8ff') + curve(br, '#ffff00');
  days.forEach((d, i) => { out += label(dayX[i] - 8, 327, d, '#c0c0c0', 'middle'); });
  document.getElementById('arbr').innerHTML = out;
}

function drawIntraday() {
  let out = '';
  for (let x = 841.5; x < 990; x += 31) out += line(x, 6, x, 332, GRID);
  for (let x = 826.5; x < 990; x += 31) out += line(x, 9, x, 332, GRID, DOTS);
  [26.5, 47.5, 67.5, 87.5, 108.5, 128.5, 148.5, 189.5, 209.5, 229.5, 250.5, 270.5, 290.5, 311.5, 332.5]
    .forEach(y => { out += line(810, y, 995, y, GRID); });
  out += line(810, 7, 995, 7, GRID, 'stroke-width="2"') + line(810, 169.5, 995, 169.5, GRID, 'stroke-width="3"');
  out += curve(today, '#fff');
  out += label(811, 345, '08:00', '#c0c0c0') + label(873, 345, '16:00', '#c0c0c0') + label(935, 345, '00:00', '#c0c0c0');
  document.getElementById('intraday').innerHTML = out;
}

drawPrice();
drawMacd();
drawArbr();
drawIntraday();
```
